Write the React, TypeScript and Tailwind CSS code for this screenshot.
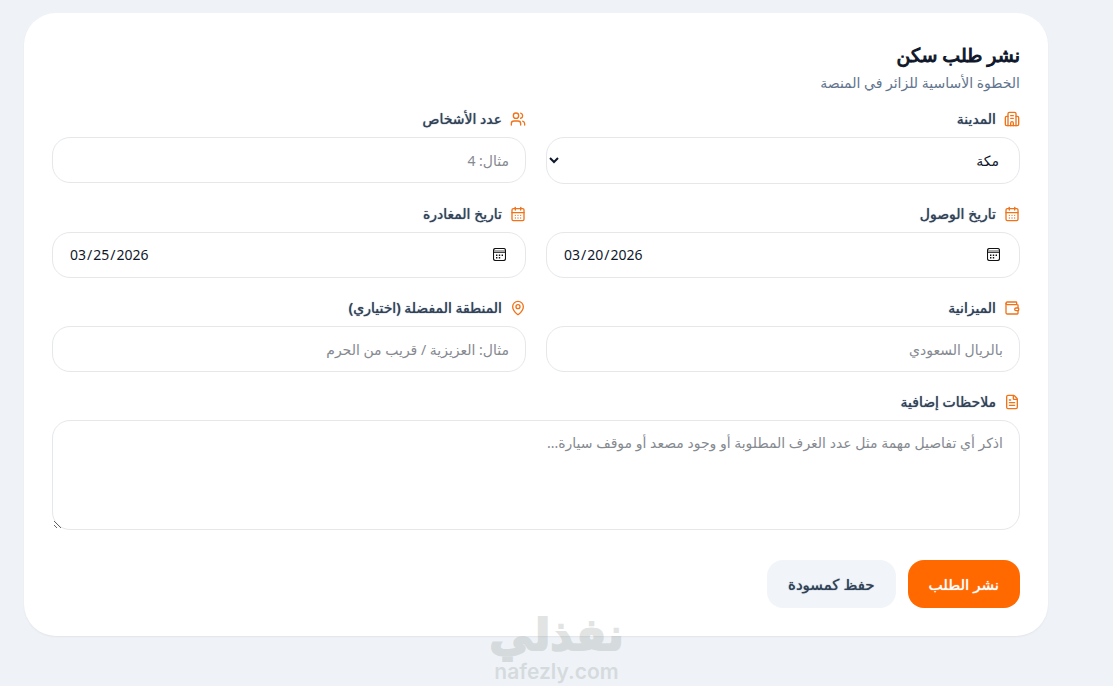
import type { ReactNode } from "react";
import {
  CalendarDays,
  FileText,
  MapPin,
  Users,
  Wallet,
} from "lucide-react";

const control =
  "block w-full rounded-[18px] border border-gray-200 bg-white px-4 text-sm text-slate-900 outline-none placeholder:text-[#858990] focus:border-orange-400";

const action = "h-12 rounded-2xl px-[21px] text-[15px] font-medium [text-shadow:0_0_1px_currentColor]";

const iconStyle = "size-4 shrink-0 text-[#f0731a]";

type FieldProps = {
  id: string;
  label: string;
  icon: ReactNode;
  wide?: boolean;
  children: ReactNode;
};

function Field({ id, label, icon, wide = false, children }: FieldProps) {
  return (
    <div className={wide ? "sm:col-span-2" : ""}>
      <label
        htmlFor={id}
        className="mb-2 flex h-5 items-center gap-2 text-sm leading-5 font-medium text-slate-700 [text-shadow:0_0_1px_currentColor]"
      >
        {icon}
        {label}
      </label>
      {children}
    </div>
  );
}

function BuildingIcon() {
  return (
    <svg
      viewBox="0 0 24 24"
      className={iconStyle}
      fill="none"
      stroke="currentColor"
      strokeWidth="2"
      strokeLinecap="round"
      strokeLinejoin="round"
      aria-hidden="true"
    >
      <path d="M6 22V4a2 2 0 0 1 2-2h8a2 2 0 0 1 2 2v18" />
      <path d="M6 8H4a2 2 0 0 0-2 2v10a2 2 0 0 0 2 2h16a2 2 0 0 0 2-2V10a2 2 0 0 0-2-2h-2" />
      <path d="M10 7h4M10 11h4M10 22v-4a2 2 0 0 1 4 0v4" />
    </svg>
  );
}

function DateInput({ id, value }: { id: string; value: string }) {
  return (
    <div className="relative">
      <input
        id={id}
        type="date"
        dir="ltr"
        defaultValue={value}
        className={`${control} h-[46px] [&::-webkit-calendar-picker-indicator]:opacity-0`}
      />
      <svg
        viewBox="0 0 13 13"
        className="pointer-events-none absolute top-4 right-5 size-[13px]"
        fill="none"
        stroke="#111"
        aria-hidden="true"
      >
        <path d="M1 2h11v2H1z" fill="#aaa" stroke="none" />
        <rect x="0.5" y="0.5" width="12" height="12" rx="2" strokeWidth="1.1" />
        <path d="M1 4.5h11" strokeWidth="0.8" />
        <path d="M5.8 7.2h1.4M8.6 7.2H10M3 9.8h1.4M5.8 9.8h1.4M3 7.2h1.4" strokeWidth="1.4" />
      </svg>
    </div>
  );
}

function Watermark() {
  return (
    <div className="pointer-events-none absolute inset-x-0 top-[610px] flex flex-col items-center text-[#8c9690] opacity-25 select-none">
      <span className="font-['DejaVu_Sans',sans-serif] text-[44px] leading-[50px] font-bold [-webkit-text-stroke:2px_currentColor]">
        نفذلي
      </span>
      <span dir="ltr" className="font-['Inter',sans-serif] text-[21px] leading-6 font-semibold">
        nafezly.com
      </span>
    </div>
  );
}

export default function App() {
  return (
    <div
      dir="rtl"
      lang="ar"
      className="relative min-h-screen overflow-hidden bg-[#eff3f8] pt-[13px] pr-[65px] pb-12 pl-6 font-['Noto_Sans','DejaVu_Sans',sans-serif]"
    >
      <main className="rounded-[32px] bg-white p-7 shadow-[0_1px_2px_rgba(0,0,0,0.06)]">
        <header className="mb-4">
          <h1 className="text-[19px] leading-7 font-medium text-slate-900 [-webkit-text-stroke:1px_currentColor]">
            نشر طلب سكن
          </h1>
          <p className="mt-1 text-sm leading-5 text-slate-500">الخطوة الأساسية للزائر في المنصة</p>
        </header>

        <form onSubmit={(event) => event.preventDefault()}>
          <div className="grid grid-cols-1 gap-5 sm:grid-cols-2">
            <Field id="city" label="المدينة" icon={<BuildingIcon />}>
              <select id="city" defaultValue="مكة" className={`${control} h-[47px]`}>
                <option>مكة</option>
                <option>المدينة المنورة</option>
              </select>
            </Field>
            <Field id="people" label="عدد الأشخاص" icon={<Users className={iconStyle} aria-hidden="true" />}>
              <input id="people" type="text" inputMode="numeric" placeholder="مثال: 4" className={`${control} h-[46px]`} />
            </Field>
            <Field id="arrival" label="تاريخ الوصول" icon={<CalendarDays className={iconStyle} aria-hidden="true" />}>
              <DateInput id="arrival" value="2026-03-20" />
            </Field>
            <Field id="departure" label="تاريخ المغادرة" icon={<CalendarDays className={iconStyle} aria-hidden="true" />}>
              <DateInput id="departure" value="2026-03-25" />
            </Field>
            <Field id="budget" label="الميزانية" icon={<Wallet className={iconStyle} aria-hidden="true" />}>
              <input id="budget" type="text" inputMode="numeric" placeholder="بالريال السعودي" className={`${control} h-[46px]`} />
            </Field>
            <Field id="area" label="المنطقة المفضلة (اختياري)" icon={<MapPin className={iconStyle} aria-hidden="true" />}>
              <input id="area" type="text" placeholder="مثال: العزيزية / قريب من الحرم" className={`${control} h-[46px]`} />
            </Field>
            <Field id="notes" label="ملاحظات إضافية" icon={<FileText className={iconStyle} aria-hidden="true" />} wide>
              <textarea
                id="notes"
                placeholder="اذكر أي تفاصيل مهمة مثل عدد الغرف المطلوبة أو وجود مصعد أو موقف سيارة..."
                className={`${control} h-[110px] resize-y py-3 leading-5`}
              />
            </Field>
          </div>

          <div className="mt-[30px] flex flex-wrap gap-3">
            <button type="submit" className={`${action} bg-[#ff6900] text-white`}>
              نشر الطلب
            </button>
            <button type="button" className={`${action} bg-slate-100 text-slate-700`}>
              حفظ كمسودة
            </button>
          </div>
        </form>
      </main>
      <Watermark />
    </div>
  );
}
